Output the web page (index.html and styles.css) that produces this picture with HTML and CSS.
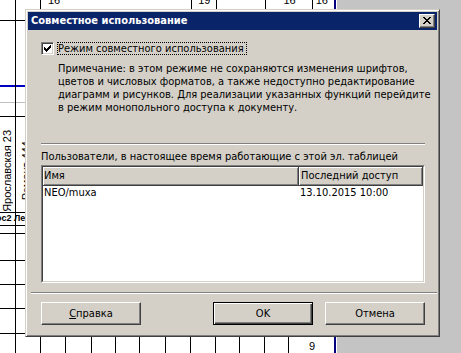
FILE: index.html
```html
<!DOCTYPE html>
<html lang="ru">
<head>
<meta charset="utf-8">
<title>Совместное использование</title>
<link rel="stylesheet" href="styles.css">
</head>
<body>
<div class="sheet">
  <div class="toprow">
    <span class="num n1">16</span>
    <span class="num n2">19</span>
    <span class="num n3">16</span>
    <span class="num n4">16</span>
  </div>
  <div class="leftcol">
    <div class="cell-gap"></div>
    <div class="cell-rot">
      <span class="rot r1">Ярославская 23</span>
      <span class="rot r2">Ремонт 444</span>
    </div>
    <div class="cell-short"><span class="b1">ос2</span><span class="b2">Ле</span></div>
  </div>
  <div class="bottomrow"><span class="num n5">9</span></div>

  <div class="dialog">
    <div class="titlebar">
      <span class="title">Совместное использование</span>
      <span class="closebtn">
        <svg width="8" height="7" viewBox="0 0 8 7" shape-rendering="crispEdges">
          <path d="M0 0h2v1h-2zM6 0h2v1h-2zM1 1h2v1h-2zM5 1h2v1h-2zM2 2h4v1h-4zM3 3h2v1h-2zM2 4h4v1h-4zM1 5h2v1h-2zM5 5h2v1h-2zM0 6h2v1h-2zM6 6h2v1h-2z" fill="#000"/>
        </svg>
      </span>
    </div>
    <div class="chkrow">
      <span class="chk">
        <svg width="7" height="7" viewBox="0 0 7 7" shape-rendering="crispEdges">
          <path d="M6 0h1v1h-1zM5 1h2v1h-2zM0 2h1v1h-1zM4 2h3v1h-3zM0 3h2v1h-2zM3 3h3v1h-3zM0 4h5v1h-5zM1 5h3v1h-3zM2 6h1v1h-1z" fill="#000"/>
        </svg>
      </span>
      <span class="chklabel">Режим совместного использования</span>
    </div>
    <p class="note">Примечание: в этом режиме не сохраняются изменения шрифтов,<br>цветов и числовых форматов, а также недоступно редактирование<br>диаграмм и рисунков. Для реализации указанных функций перейдите<br>в режим монопольного доступа к документу.</p>
    <div class="sep"></div>
    <div class="users">Пользователи, в настоящее время работающие с этой эл. таблицей</div>
    <div class="listbox">
      <div class="listinner">
        <div class="lhead">
          <div class="hcell c1">Имя</div>
          <div class="hcell c2">Последний доступ</div>
        </div>
        <div class="lrow">
          <div class="rcell c1">NEO/muxa</div>
          <div class="rcell c2">13.10.2015 10:00</div>
        </div>
      </div>
    </div>
    <div class="sep sep2"></div>
    <div class="buttons">
      <div class="btn help"><u>С</u>правка</div>
      <div class="btn ok">OK</div>
      <div class="btn cancel">Отмена</div>
    </div>
  </div>
</div>
</body>
</html>
```
FILE: styles.css
```css
html, body {
  margin: 0;
  padding: 0;
  background: #ffffff;
}

.sheet {
  position: relative;
  width: 461px;
  height: 353px;
  overflow: hidden;
  font-family: "Liberation Sans", Arial, sans-serif;
  font-size: 11px;
  color: #000;
  background-color: #ffffff;
  background-image:
    linear-gradient(#c4c4c4, #c4c4c4),
    linear-gradient(#000080, #000080),
    linear-gradient(#000, #000),
    linear-gradient(#000, #000),
    linear-gradient(#000, #000),
    linear-gradient(#000, #000),
    linear-gradient(#000, #000),
    linear-gradient(#000, #000),
    linear-gradient(#000, #000),
    linear-gradient(#000, #000),
    linear-gradient(#000, #000),
    linear-gradient(#000, #000),
    linear-gradient(#000, #000),
    linear-gradient(#000, #000),
    linear-gradient(#000, #000),
    linear-gradient(#000, #000),
    linear-gradient(#000, #000),
    linear-gradient(#000, #000),
    linear-gradient(#000, #000),
    linear-gradient(#0000c0, #0000c0),
    linear-gradient(#c0c0c0, #c0c0c0),
    linear-gradient(#000, #000),
    linear-gradient(#000, #000),
    linear-gradient(#000, #000),
    linear-gradient(#000, #000),
    linear-gradient(#000, #000),
    linear-gradient(#000, #000),
    linear-gradient(#000, #000),
    linear-gradient(#000, #000);
  background-repeat: no-repeat;
  background-size:
    124px 353px,
    2px 353px,
    1px 353px,
    1px 353px,
    1px 10px,
    1px 10px,
    1px 10px,
    1px 10px,
    1px 16px,
    1px 16px,
    1px 16px,
    1px 16px,
    1px 16px,
    1px 16px,
    1px 16px,
    1px 16px,
    1px 16px,
    1px 16px,
    40px 1px,
    26px 2px,
    26px 1px,
    26px 1px,
    26px 1px,
    26px 1px,
    26px 1px,
    26px 1px,
    26px 1px,
    26px 1px,
    26px 1px;
  background-position:
    337px 0,
    334px 0,
    15px 0,
    40px 0,
    191px 0,
    216px 0,
    265px 0,
    312px 0,
    65px 337px,
    91px 337px,
    115px 337px,
    139px 337px,
    165px 337px,
    190px 337px,
    215px 337px,
    239px 337px,
    264px 337px,
    288px 337px,
    0 20px,
    0 85px,
    0 102px,
    0 116px,
    0 212px,
    0 225px,
    0 233px,
    0 260px,
    0 284px,
    0 308px,
    0 333px;
}

.toprow {
  display: flex;
  height: 10px;
  overflow: hidden;
}
.num {
  display: block;
  line-height: 11px;
  margin-top: -5px;
}
.n1 { margin-left: 48px; }
.n2 { margin-left: 138px; }
.n3 { margin-left: 73px; }
.n4 { margin-left: 20px; }

.leftcol {
  width: 26px;
  display: flex;
  flex-direction: column;
}
.cell-gap { height: 110px; }
.cell-rot {
  height: 92px;
  display: flex;
  align-items: flex-end;
  overflow: hidden;
}
.rot {
  writing-mode: vertical-rl;
  transform: rotate(180deg);
  line-height: 12px;
  white-space: nowrap;
}
.r1 { width: 12px; margin-left: 1px; }
.r2 { width: 12px; margin-left: 7px; margin-bottom: 12px; }
.cell-short {
  margin-top: 0;
  height: 13px;
  display: flex;
  font-weight: bold;
  font-size: 9px;
  line-height: 13px;
  white-space: nowrap;
}
.b1 { width: 15px; margin-left: -4px; }
.b2 { margin-left: 3px; }

.bottomrow {
  position: absolute;
  left: 0;
  bottom: 0;
  width: 335px;
  height: 16px;
  display: flex;
}
.n5 { margin-left: 309px; margin-top: 4px; }

.dialog {
  position: absolute;
  left: 25px;
  top: 9px;
  width: 415px;
  height: 328px;
  box-sizing: border-box;
  padding: 2px;
  background: #d4d0c8;
  border: 1px solid;
  border-color: #d4d0c8 #404040 #404040 #d4d0c8;
  box-shadow: inset 1px 1px #ffffff, inset -1px -1px #808080;
  display: flex;
  flex-direction: column;
  font-family: "DejaVu Sans Condensed", "DejaVu Sans", sans-serif;
  font-size: 11px;
  color: #000;
}

.titlebar {
  height: 18px;
  flex: none;
  background: #0a246a;
  display: flex;
  align-items: center;
  padding-left: 3px;
}
.title {
  color: #ffffff;
  font-weight: bold;
  font-size: 11px;
  line-height: 14px;
  white-space: nowrap;
}
.closebtn {
  margin-left: auto;
  margin-right: 2px;
  width: 16px;
  height: 14px;
  box-sizing: border-box;
  background: #d4d0c8;
  border: 1px solid;
  border-color: #ffffff #404040 #404040 #ffffff;
  box-shadow: inset -1px -1px #808080;
  display: flex;
  align-items: center;
  justify-content: center;
  padding: 0 1px 1px 0;
}
.closebtn svg { display: block; }

.chkrow {
  display: flex;
  align-items: center;
  margin: 12px 0 0 13px;
  height: 13px;
}
.chk {
  width: 13px;
  height: 13px;
  box-sizing: border-box;
  border: 1px solid;
  border-color: #808080 #ffffff #ffffff #808080;
  box-shadow: inset 1px 1px #404040, inset -1px -1px #d4d0c8;
  background: #ffffff;
  display: flex;
  align-items: center;
  justify-content: center;
}
.chk svg { display: block; }
.chklabel {
  margin-left: 3px;
  padding: 0 2px 0 0;
  line-height: 11px;
  border: 1px dotted #000;
  white-space: nowrap;
}

.note {
  margin: 7px 0 0 30px;
  line-height: 13px;
  white-space: nowrap;
}

.sep {
  margin: 29px 12px 0 13px;
  height: 0;
  border-top: 1px solid #808080;
  border-bottom: 1px solid #ffffff;
}

.users {
  margin: 5px 0 0 13px;
  line-height: 13px;
  white-space: nowrap;
}

.listbox {
  margin: 2px 0 0 13px;
  width: 384px;
  height: 118px;
  flex: none;
  box-sizing: border-box;
  border: 1px solid;
  border-color: #808080 #ffffff #ffffff #808080;
  background: #ffffff;
}
.listinner {
  height: 100%;
  box-sizing: border-box;
  border: 1px solid;
  border-color: #404040 #d4d0c8 #d4d0c8 #404040;
}
.lhead {
  display: flex;
  height: 19px;
}
.hcell {
  box-sizing: border-box;
  height: 19px;
  background: #d4d0c8;
  border-right: 1px solid #404040;
  border-bottom: 1px solid #404040;
  box-shadow: inset 1px 1px #ffffff, inset -1px -1px #808080;
  line-height: 18px;
  white-space: nowrap;
}
.hcell.c1 { width: 256px; padding-left: 1px; }
.hcell.c2 { width: 124px; padding-left: 2px; }
.lrow {
  display: flex;
  height: 14px;
  line-height: 14px;
}
.rcell { white-space: nowrap; padding-left: 1px; box-sizing: border-box; }
.rcell.c1 { width: 256px; }
.rcell.c2 { width: 124px; }

.sep2 {
  margin: 9px 0 0 3px;
}

.buttons {
  display: flex;
  margin: 8px 0 0 13px;
}
.btn {
  width: 100px;
  height: 23px;
  box-sizing: border-box;
  background: #d4d0c8;
  border: 1px solid;
  border-color: #ffffff #404040 #404040 #ffffff;
  box-shadow: inset -1px -1px #808080;
  text-align: center;
  line-height: 21px;
}
.btn u { text-decoration-thickness: 1px; text-underline-offset: 1px; }
.help { margin-right: 72px; }
.ok {
  margin-right: 12px;
  border-color: #000;
  box-shadow: inset 1px 1px #ffffff, inset -1px -1px #404040, inset -2px -2px #808080;
}
```
